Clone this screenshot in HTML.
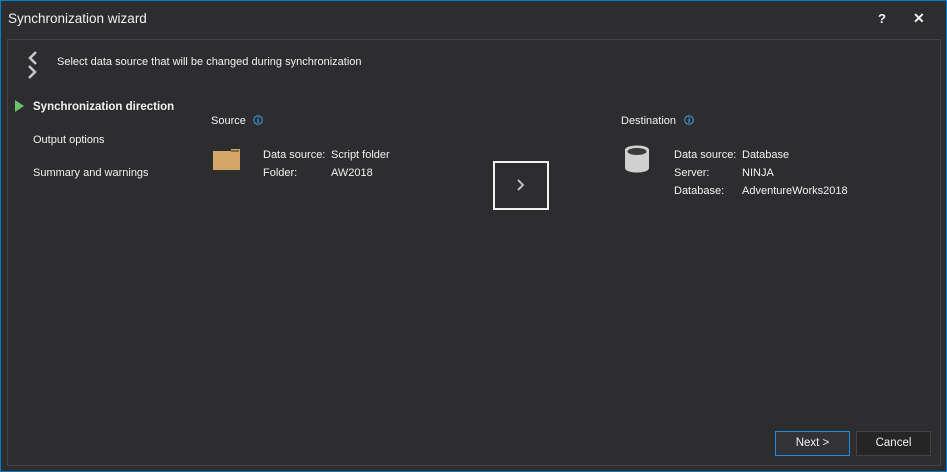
<!DOCTYPE html>
<html><head><style>
*{margin:0;padding:0;box-sizing:border-box}
body{width:947px;height:472px;background:#2d2d30;font-family:"Liberation Sans",sans-serif;color:#f1f1f1;font-size:11px;position:relative;overflow:hidden}
.win{position:absolute;left:0;top:0;width:947px;height:472px;border:1px solid #007acc}
.a{position:absolute;white-space:nowrap}
.panel{position:absolute;left:7px;top:39px;width:934px;height:427px;border:1px solid #434346}
.btn{position:absolute;top:431px;width:75px;height:25px;text-align:center;line-height:23px;font-size:11.5px}
</style></head><body>
<div class="win"></div>
<div class="a" style="left:8px;top:11px;font-size:13.5px">Synchronization wizard</div>
<div class="a" style="left:878px;top:11px;font-size:13px;font-weight:bold">?</div>
<div class="a" style="left:913px;top:10px;font-size:14px;font-weight:bold">✕</div>
<div class="panel"></div>
<svg class="a" style="left:25px;top:50px" width="16" height="30"><path d="M11 2 L5 8 L11 14" stroke="#c8c8c8" stroke-width="2.5" fill="none"/><path d="M4 16 L10 22 L4 28" stroke="#c8c8c8" stroke-width="2.5" fill="none"/></svg>
<div class="a" style="left:57px;top:56px">Select data source that will be changed during synchronization</div>
<svg class="a" style="left:15px;top:100px" width="10" height="12"><path d="M0 0 L9 6 L0 12Z" fill="#6cc070"/></svg>
<div class="a" style="left:33px;top:101px;font-weight:bold;font-size:11.5px">Synchronization direction</div>
<div class="a" style="left:33px;top:134px">Output options</div>
<div class="a" style="left:33px;top:167px">Summary and warnings</div>
<div class="a" style="left:211px;top:115px">Source</div>
<svg class="a" style="left:253px;top:115px" width="10" height="10"><circle cx="5" cy="5" r="4.3" stroke="#3ea0e8" fill="none"/><rect x="4.5" y="4" width="1.2" height="4" fill="#3ea0e8"/><rect x="4.5" y="2.2" width="1.2" height="1.2" fill="#3ea0e8"/></svg>
<svg class="a" style="left:213px;top:148px" width="28" height="24"><path d="M0 3 H18 V1 H27 V22 H0Z" fill="#d4a768"/><path d="M18 3 H26" stroke="#2d2d30" stroke-width="1"/></svg>
<div class="a" style="left:263px;top:146px;line-height:18px">Data source:<br>Folder:</div>
<div class="a" style="left:331px;top:146px;line-height:18px">Script folder<br>AW2018</div>
<div class="a" style="left:493px;top:161px;width:56px;height:49px;border:2px solid #f1f1f1"></div>
<svg class="a" style="left:517px;top:179px" width="8" height="12"><path d="M1 1 L6 6 L1 11" stroke="#bbb" stroke-width="2" fill="none"/></svg>
<div class="a" style="left:621px;top:115px">Destination</div>
<svg class="a" style="left:684px;top:115px" width="10" height="10"><circle cx="5" cy="5" r="4.3" stroke="#3ea0e8" fill="none"/><rect x="4.5" y="4" width="1.2" height="4" fill="#3ea0e8"/><rect x="4.5" y="2.2" width="1.2" height="1.2" fill="#3ea0e8"/></svg>
<svg class="a" style="left:625px;top:145px" width="25" height="29"><path d="M0 5 C0 -1 24 -1 24 5 V23 C24 29 0 29 0 23Z" fill="#d0d0d0"/><ellipse cx="12" cy="6.5" rx="9.5" ry="3.5" fill="#3a3a3d"/></svg>
<div class="a" style="left:674px;top:146px;line-height:18px">Data source:<br>Server:<br>Database:</div>
<div class="a" style="left:742px;top:146px;line-height:18px">Database<br>NINJA<br>AdventureWorks2018</div>
<div class="btn" style="left:775px;border:1px solid #1e8ae0;background:#333337">Next &gt;</div>
<div class="btn" style="left:856px;border:1px solid #434346;background:#252526">Cancel</div>
</body></html>
